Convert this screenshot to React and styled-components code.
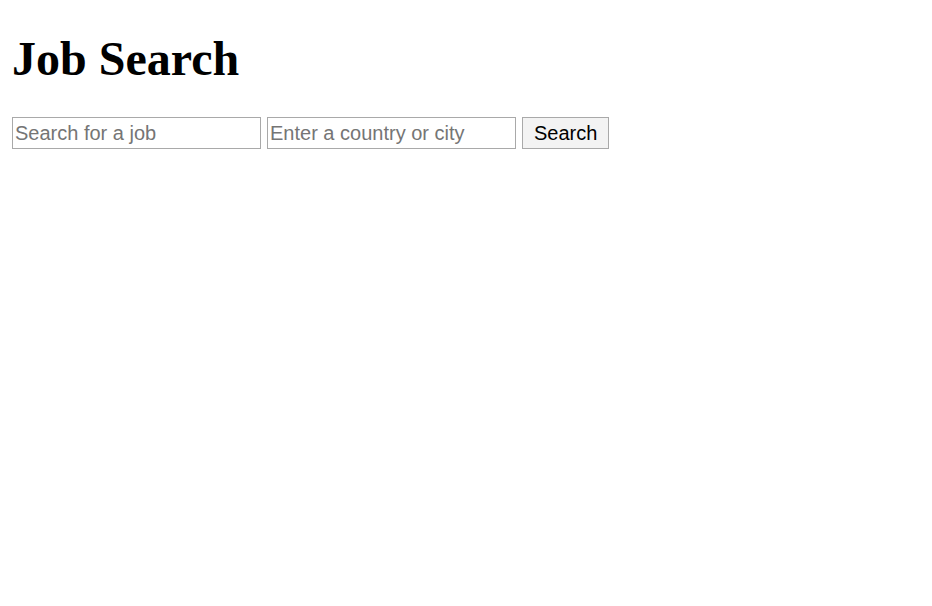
import React from "react";
import styled, { createGlobalStyle } from "styled-components";

const GlobalStyle = createGlobalStyle`
  body {
    margin: 0;
    background: #fff;
    font-family: "Liberation Serif", "Times New Roman", serif;
  }
`;

const Wrapper = styled.div`
  padding: 12px 12px;
`;

const Title = styled.h1`
  font-family: "Liberation Serif", "Times New Roman", serif;
  font-size: 48px;
  font-weight: 700;
  color: #000;
  margin: 19px 0 31px;
  line-height: 55px;
`;

const SearchForm = styled.form`
  display: flex;
  align-items: center;
  gap: 6px;
`;

const Field = styled.input`
  box-sizing: border-box;
  width: 249px;
  height: 32px;
  padding: 1px 2px;
  border: 1px solid #a9a9a9;
  font-family: "Liberation Sans", Arial, sans-serif;
  font-size: 20px;
  color: #000;
  &::placeholder {
    color: #757575;
  }
`;

const Button = styled.button`
  box-sizing: border-box;
  height: 32px;
  padding: 1px 11px;
  border: 1px solid #a9a9a9;
  background: #f3f3f3;
  font-family: "Liberation Sans", Arial, sans-serif;
  font-size: 20px;
  color: #000;
`;

const App = () => {
  return (
    <Wrapper>
      <GlobalStyle />
      <Title>Job Search</Title>
      <SearchForm onSubmit={(e) => e.preventDefault()}>
        <Field type="text" placeholder="Search for a job" />
        <Field type="text" placeholder="Enter a country or city" />
        <Button type="submit">Search</Button>
      </SearchForm>
    </Wrapper>
  );
};

export default App;
